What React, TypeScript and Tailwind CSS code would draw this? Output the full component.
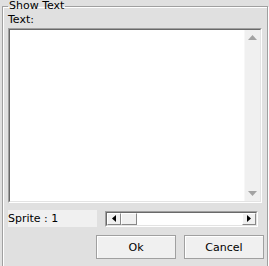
export default function App() {
	return (
		<div className="w-[269px] h-[266px] bg-[#e0e0e0] overflow-hidden font-['DejaVu_Sans',sans-serif] text-[11px] text-black leading-none">
			<fieldset className="ml-[2px] mt-0 w-[263px] h-[280px] border border-[#a0a0a0] shadow-[inset_1px_1px_0_#fff,1px_1px_0_#fff] px-[5px]">
				<legend className="px-[1px] leading-[12px]">Show Text</legend>
				<div className="mt-[2px] leading-[12px]">Text:</div>
				{/* text area */}
				<div className="mt-[2px] w-[254px] h-[175px] flex border border-[#a0a0a0] border-b-white border-r-white">
					<div className="flex-1 flex border border-[#696969] border-b-[#e3e3e3] border-r-[#e3e3e3]">
						<div className="flex-1 bg-white" />
						<div className="w-[16px] bg-[#f0f0f0] border-l border-[#f7f7f7] flex flex-col items-center justify-between py-[5px]">
							<svg width="9" height="5" viewBox="0 0 9 5">
								<path d="M4.5 0L9 5H0Z" fill="#a3a3a3" />
							</svg>
							<svg width="9" height="5" viewBox="0 0 9 5">
								<path d="M0 0H9L4.5 5Z" fill="#a3a3a3" />
							</svg>
						</div>
					</div>
				</div>
				{/* sprite row */}
				<div className="mt-[7px] flex items-center">
					<div className="w-[89px] h-[17px] bg-[#f0f0f0] flex items-center leading-[12px]">Sprite : 1</div>
					<div className="ml-[8px] w-[153px] h-[16px] flex border border-[#a0a0a0] border-b-white border-r-white">
						<div className="flex-1 flex border border-[#696969] border-b-[#e3e3e3] border-r-[#e3e3e3] bg-white">
							<div className="w-[14px] bg-[#f0f0f0] border border-white border-b-[#888] border-r-[#888] flex items-center justify-center">
								<svg width="4" height="7" viewBox="0 0 4 7">
									<path d="M0 3.5L4 0V7Z" fill="#000" />
								</svg>
							</div>
							<div className="w-[16px] bg-[#f0f0f0] border border-white border-b-[#888] border-r-[#888]" />
							<div className="flex-1" />
							<div className="w-[14px] bg-[#f0f0f0] border border-white border-b-[#888] border-r-[#888] flex items-center justify-center">
								<svg width="4" height="7" viewBox="0 0 4 7">
									<path d="M4 3.5L0 0V7Z" fill="#000" />
								</svg>
							</div>
						</div>
					</div>
				</div>
				{/* buttons */}
				<div className="mt-[8px] flex justify-end gap-[8px] mr-[-2px]">
					<button className="w-[80px] h-[24px] bg-[#f0f0f0] border border-[#a0a0a0] shadow-[inset_1px_1px_0_#fff] text-[11px]">Ok</button>
					<button className="w-[80px] h-[24px] bg-[#f0f0f0] border border-[#a0a0a0] shadow-[inset_1px_1px_0_#fff] text-[11px]">Cancel</button>
				</div>
			</fieldset>
		</div>
	);
}
